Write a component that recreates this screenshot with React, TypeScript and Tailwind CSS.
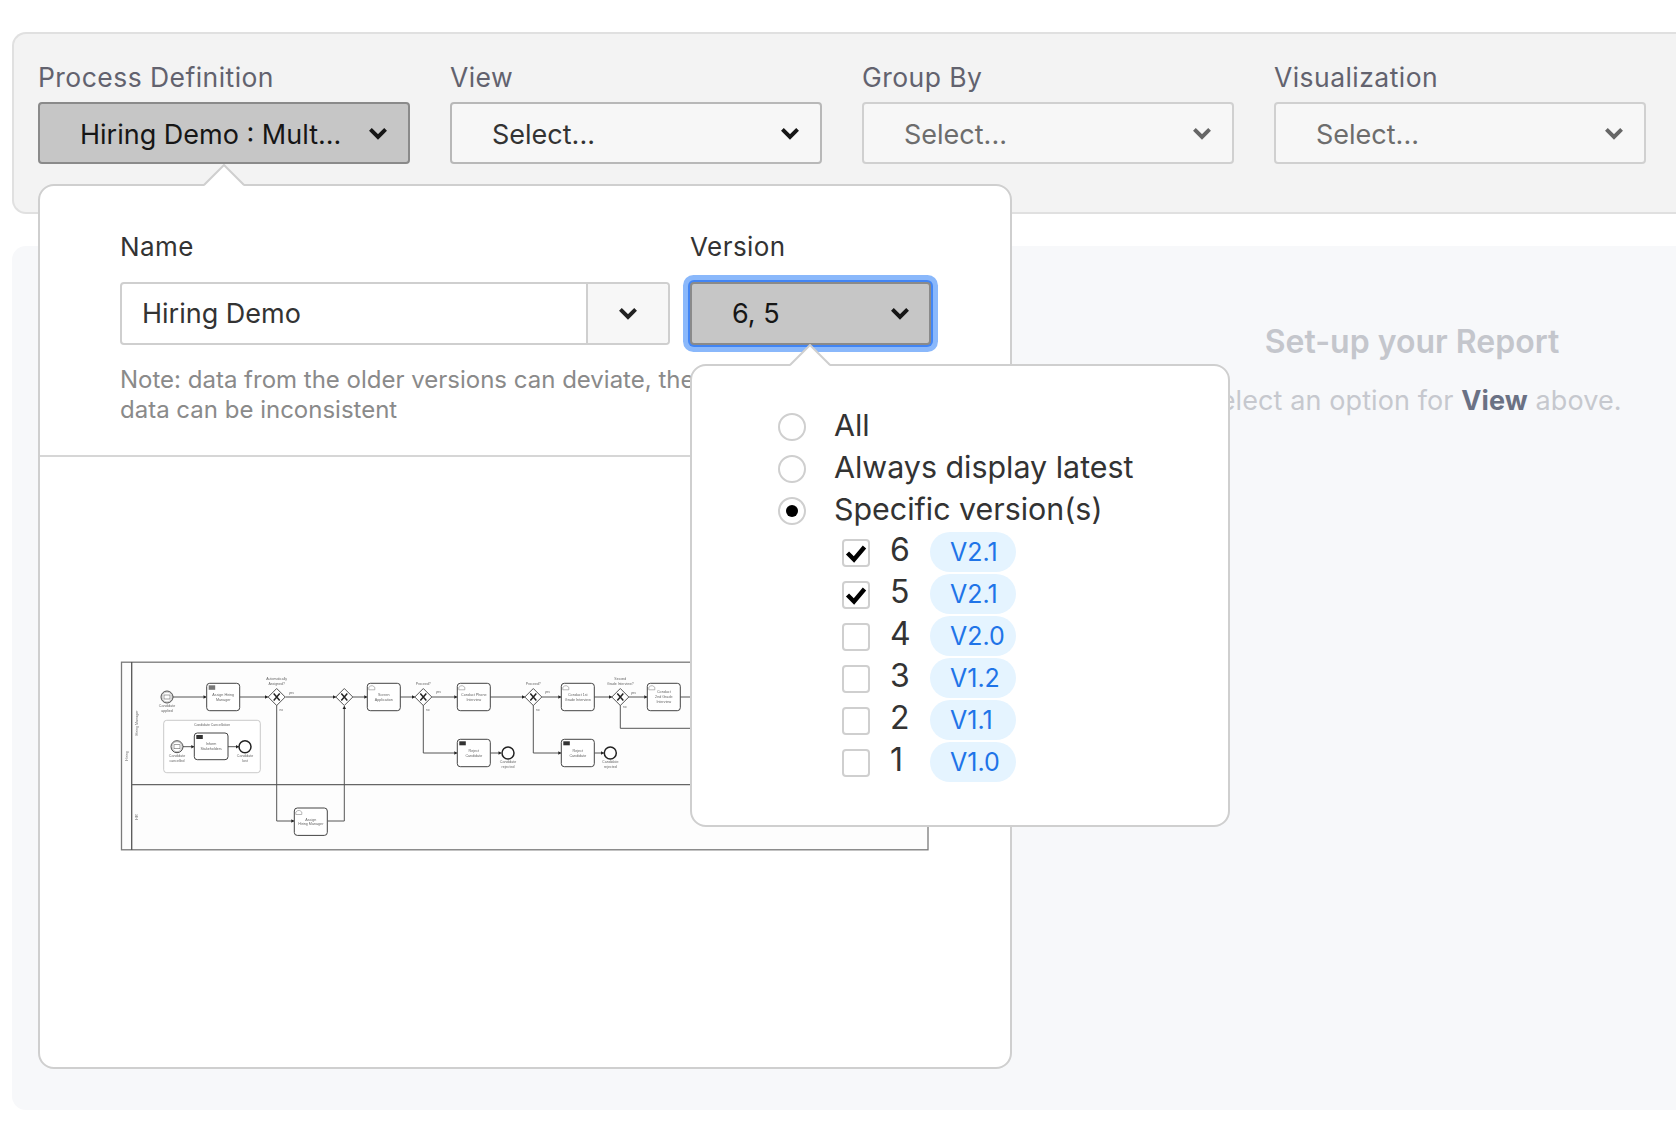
import React from 'react';

const Chevron: React.FC<{ className?: string }> = ({ className }) => (
    <svg viewBox="0 0 18 12" className={`w-[20px] h-[13px] shrink-0 ${className ?? ''}`} fill="none" stroke="currentColor" strokeWidth="3.6">
        <path d="M2 2.2 L9 9.2 L16 2.2" />
    </svg>
);

const Select: React.FC<{ label: string; value: string; state: 'active' | 'normal' | 'disabled' }> = ({ label, value, state }) => (
    <div className="w-[372px]">
        <div className="text-[26.5px] leading-[36px] text-[#62626e] tracking-[0.45px] mb-[7px]">{label}</div>
        <div
            className={
                'h-[62px] rounded border-2 flex items-center justify-between pl-[40px] pr-[20px] text-[27px] ' +
                (state === 'active'
                    ? 'bg-[#c6c6c6] border-[#8a8a8a] text-[#161616]'
                    : state === 'normal'
                      ? 'bg-[#f7f7f7] border-[#b8b8b8] text-[#333333]'
                      : 'bg-[#f7f7f7] border-[#d0d0d0] text-[#6d6d6d]')
            }
        >
            <span className="pt-[5px]">{value}</span>
            <Chevron className={state === 'disabled' ? 'text-[#666666]' : 'text-[#161616]'} />
        </div>
    </div>
);

const PopArrow: React.FC<{ className: string }> = ({ className }) => (
    <svg viewBox="0 0 42 22" className={`absolute w-[42px] h-[22px] ${className}`}>
        <polygon points="1,22 21,1 41,22" fill="#ffffff" />
        <polyline points="1,21 21,1 41,21" fill="none" stroke="#cfcfcf" strokeWidth="2" />
    </svg>
);

const Task: React.FC<{ x: number; y: number; w?: number; h?: number; lines: string[]; kind?: 'user' | 'send' | 'table' }> = ({ x, y, w = 33, h = 27.4, lines, kind }) => (
    <g>
        <rect x={x} y={y} width={w} height={h} rx="3" fill="#ffffff" stroke="#444444" strokeWidth="1" />
        {kind === 'user' && <path d={`M${x + 1.5} ${y + 6.5} v-2.5 l2 -1.5 h2 l2 1.5 v2.5 z`} fill="none" stroke="#999999" strokeWidth="0.7" />}
        {kind === 'send' && <rect x={x + 2} y={y + 2} width="6.5" height="4" fill="#333333" />}
        {kind === 'table' && <rect x={x + 2} y={y + 2} width="6.5" height="4.5" fill="#777777" />}
        {lines.map((l, i) => (
            <text key={i} x={x + w / 2} y={y + h / 2 + 1.2 + (i - (lines.length - 1) / 2) * 4.8} textAnchor="middle" fontSize="3.7" fill="#666666">{l}</text>
        ))}
    </g>
);

const Gateway: React.FC<{ x: number; y?: number; label?: string[] }> = ({ x, y = 696, label }) => (
    <g>
        <polygon points={`${x},${y - 8.5} ${x + 8.5},${y} ${x},${y + 8.5} ${x - 8.5},${y}`} fill="#ffffff" stroke="#555555" strokeWidth="1" />
        <path d={`M${x - 3} ${y - 3.5} L${x + 3} ${y + 3.5} M${x + 3} ${y - 3.5} L${x - 3} ${y + 3.5}`} stroke="#222222" strokeWidth="1.5" />
        {label?.map((l, i) => (
            <text key={i} x={x} y={y - 12.5 - (label.length - 1 - i) * 4.6} textAnchor="middle" fontSize="3.5" fill="#666666">{l}</text>
        ))}
    </g>
);

const Evt: React.FC<{ x: number; y: number; end?: boolean; lines: string[] }> = ({ x, y, end, lines }) => (
    <g>
        <circle cx={x} cy={y} r="6" fill="#ffffff" stroke="#222222" strokeWidth={end ? 1.5 : 0.8} />
        {!end && <circle cx={x} cy={y} r="5" fill="none" stroke="#666666" strokeWidth="0.4" />}
        {!end && <rect x={x - 3} y={y - 2} width="6" height="4" fill="none" stroke="#666666" strokeWidth="0.6" />}
        {lines.map((l, i) => (
            <text key={i} x={x} y={y + 10 + i * 4.8} textAnchor="middle" fontSize="3.6" fill="#666666">{l}</text>
        ))}
    </g>
);

// flow line ending in a small arrow head, going along the given points
const Flow: React.FC<{ d: string; tip: [number, number]; dir?: 'r' | 'u' }> = ({ d, tip, dir = 'r' }) => (
    <g>
        <path d={d} fill="none" stroke="#555555" strokeWidth="1" />
        {dir === 'r'
            ? <polygon points={`${tip[0]},${tip[1]} ${tip[0] - 3},${tip[1] - 1.8} ${tip[0] - 3},${tip[1] + 1.8}`} fill="#222222" />
            : <polygon points={`${tip[0]},${tip[1]} ${tip[0] - 1.8},${tip[1] + 3} ${tip[0] + 1.8},${tip[1] + 3}`} fill="#222222" />}
    </g>
);

const Note: React.FC<{ x: number; y: number; t: string }> = ({ x, y, t }) => (
    <text x={x} y={y} fontSize="3.2" fill="#666666">{t}</text>
);

const Diagram = () => (
    <svg viewBox="120 660 812 192" className="w-[812px] h-[192px] block blur-[0.25px] font-['Liberation_Sans',sans-serif]">
        <rect x="121.5" y="661.2" width="806.5" height="187.6" fill="#fdfdfd" stroke="#7a7a7a" strokeWidth="1.3" />
        <path d="M131.7 661 V849" stroke="#555555" strokeWidth="1.3" />
        <path d="M131.7 783.7 H928" stroke="#666666" strokeWidth="1.3" />
        <text transform="translate(127.5 755) rotate(-90)" textAnchor="middle" fontSize="3.7" fill="#666666">Hiring</text>
        <text transform="translate(138 722) rotate(-90)" textAnchor="middle" fontSize="3.7" fill="#666666">Hiring Manager</text>
        <text transform="translate(138 816) rotate(-90)" textAnchor="middle" fontSize="3.7" fill="#666666">HR</text>

        <Flow d="M173 696 H206" tip={[206.5, 696]} />
        <Flow d="M239.7 696 H268" tip={[268, 696]} />
        <Flow d="M285.5 696 H336" tip={[336, 696]} />
        <Flow d="M353 696 H367" tip={[367.3, 696]} />
        <Flow d="M400 696 H415" tip={[415, 696]} />
        <Flow d="M432 696 H457" tip={[457.3, 696]} />
        <Flow d="M490 696 H525" tip={[525, 696]} />
        <Flow d="M542 696 H561" tip={[561.3, 696]} />
        <Flow d="M594 696 H612" tip={[612, 696]} />
        <Flow d="M629 696 H647" tip={[647.3, 696]} />
        <path d="M680 696 H692 M620.3 704 V727.3 H700" fill="none" stroke="#555555" strokeWidth="1" />
        <Flow d="M276.7 704 V820 H294" tip={[294.3, 820]} />
        <Flow d="M327.7 820 H344.3 V705" tip={[344.3, 705]} dir="u" />
        <Flow d="M423.3 704 V752 H457" tip={[457.3, 752]} />
        <Flow d="M533.3 704 V752 H561" tip={[561.3, 752]} />
        <Flow d="M490.3 752 H501" tip={[501.5, 752]} />
        <Flow d="M594.3 752 H604" tip={[604, 752]} />

        <Evt x={167} y={696} lines={['Candidate', 'applied']} />
        <Task x={206.7} y={682.3} lines={['Assign Hiring', 'Manager']} kind="table" />
        <Gateway x={276.7} label={['Automatically', 'Assigned?']} />
        <Gateway x={344.3} />
        <Task x={367.3} y={682.3} lines={['Screen', 'Application']} kind="user" />
        <Gateway x={423.3} label={['Proceed?']} />
        <Task x={457.3} y={682.3} lines={['Conduct Phone', 'Interview']} kind="user" />
        <Gateway x={533.3} label={['Proceed?']} />
        <Task x={561.3} y={682.3} lines={['Conduct 1st', 'Grade Interview']} kind="user" />
        <Gateway x={620.3} label={['Second', 'Grade Interview?']} />
        <Task x={647.3} y={682.3} lines={['Conduct', '2nd Grade', 'Interview']} kind="user" />

        <Task x={457.3} y={738.3} lines={['Reject', 'Candidate']} kind="send" />
        <Evt x={508} y={752} end lines={['Candidate', 'rejected']} />
        <Task x={561.3} y={738.3} lines={['Reject', 'Candidate']} kind="send" />
        <Evt x={610.3} y={752} end lines={['Candidate', 'rejected']} />
        <Task x={294.3} y={807} lines={['Assign', 'Hiring Manager']} kind="user" />

        <rect x="163.7" y="719.3" width="96.6" height="52.4" rx="3" fill="#ffffff" stroke="#bbbbbb" strokeWidth="0.8" />
        <text x="212" y="724.8" textAnchor="middle" fontSize="3.5" fill="#666666">Candidate Cancellation</text>
        <Flow d="M183 745.7 H194" tip={[194.3, 745.7]} />
        <Flow d="M228 745.7 H239" tip={[239, 745.7]} />
        <Evt x={177} y={745.7} lines={['Candidate', 'cancelled']} />
        <Task x={194.3} y={732} w={33.7} h={26.7} lines={['Inform', 'Stakeholders']} kind="send" />
        <Evt x={245} y={745.7} end lines={['Candidate', 'lost']} />

        <Note x={289} y={692.5} t="yes" />
        <Note x={279.5} y={710} t="no" />
        <Note x={436} y={692} t="yes" />
        <Note x={426} y={710} t="no" />
        <Note x={545} y={692} t="yes" />
        <Note x={536} y={710} t="no" />
        <Note x={631} y={693} t="yes" />
        <Note x={623} y={707} t="no" />
    </svg>
);

const Radio: React.FC<{ label: string; checked?: boolean }> = ({ label, checked }) => (
    <div className="flex items-center h-[42px] gap-[28px]">
        <span className="w-[28px] h-[28px] rounded-full border-2 border-[#cfcfcf] bg-white flex items-center justify-center shrink-0">
            {checked && <span className="w-3 h-3 rounded-full bg-black" />}
        </span>
        <span className="text-[30.4px] leading-[42px] text-[#333333] -mt-[5px] whitespace-nowrap">{label}</span>
    </div>
);

const VersionRow: React.FC<{ num: number; tag: string; checked?: boolean }> = ({ num, tag, checked }) => (
    <div className="flex items-center h-[42px] pl-[64px]">
        <span className="w-[28px] h-[28px] rounded border-2 border-[#cfcfcf] bg-white shrink-0 mt-[1px]">
            {checked && (
                <svg viewBox="0 0 24 24" className="w-6 h-6" fill="none" stroke="#000000" strokeWidth="4.4">
                    <path d="M3.5 12 L10 18.5 L20.5 6" />
                </svg>
            )}
        </span>
        <span className="w-[40px] ml-[20px] text-[32px] leading-[42px] text-[#333333] -mt-[5px]">{num}</span>
        <span className="w-[86px] h-[40px] rounded-full bg-[#e5f4ff] text-[#1f74e8] text-[25px] pl-[20px] flex items-center pt-[2px]">{tag}</span>
    </div>
);

export default function App() {
    return (
        <div className="relative w-[1676px] h-[1136px] overflow-hidden bg-white pt-8 pl-3 font-['Inter',sans-serif]">
            <div className="h-[182px] bg-[#f3f3f3] border-2 border-r-0 border-[#e0e0e0] rounded-l-[14px] pl-[24px] pt-[25px] flex gap-[40px]">
                <Select label="Process Definition" value="Hiring Demo : Mult..." state="active" />
                <Select label="View" value="Select..." state="normal" />
                <Select label="Group By" value="Select..." state="disabled" />
                <Select label="Visualization" value="Select..." state="disabled" />
            </div>

            <div className="mt-[32px] h-[864px] bg-[#f7f8fa] rounded-l-[14px] pl-[1136px] pt-[74px] flex flex-col items-center">
                <div className="text-[32px] leading-[44px] font-semibold text-[#c4c6cc]">Set-up your Report</div>
                <div className="mt-[18px] text-[27px] leading-[38px] text-[#c6c8ce] whitespace-nowrap tracking-[0.1px]">
                    Select an option for <b className="font-bold text-[#6a7184]">View</b> above.
                </div>
            </div>

            {/* process definition popover */}
            <PopArrow className="left-[203px] top-[164px] z-10" />
            <div className="absolute left-[38px] top-[184px] w-[974px] h-[885px] bg-white border-2 border-[#cfcfcf] rounded-[16px] flex flex-col">
                <div className="h-[271px] border-b-2 border-[#d6d6d6] pl-[80px] pt-[43px] shrink-0">
                    <div className="flex gap-[20px]">
                        <div className="w-[550px]">
                            <div className="text-[26px] leading-[36px] text-[#333333] tracking-[0.45px]">Name</div>
                            <div className="mt-[17px] h-[63px] rounded border-2 border-[#cfcfcf] flex items-stretch">
                                <div className="flex-1 flex items-center pl-[20px] pt-[2px] text-[27px] text-[#333333]">Hiring Demo</div>
                                <div className="w-[82px] border-l-2 border-[#cfcfcf] bg-[#f7f7f7] flex items-center justify-center rounded-r">
                                    <Chevron className="text-[#222222]" />
                                </div>
                            </div>
                        </div>
                        <div className="w-[241px]">
                            <div className="text-[26px] leading-[36px] text-[#333333] tracking-[0.45px]">Version</div>
                            <div className="mt-[17px] h-[63px] rounded border-2 border-[#8a8a8a] bg-[#c6c6c6] text-[#161616] text-[27px] flex items-center justify-between pl-[40px] pr-[19px] shadow-[0_0_0_2px_#4285f4,0_0_0_7px_#8ab8fb]">
                                <span className="pt-[2px]">6, 5</span>
                                <Chevron />
                            </div>
                        </div>
                    </div>
                    <p className="mt-[20px] w-[810px] text-[24px] leading-[30px] text-[#8a8a8a]">
                        Note: data from the older versions can deviate, therefore the report data can be inconsistent
                    </p>
                </div>
                <div className="pl-[80px] pt-[204px]">
                    <Diagram />
                </div>
            </div>

            {/* version popover */}
            <PopArrow className="left-[789px] top-[344px] z-10" />
            <div className="absolute left-[690px] top-[364px] w-[540px] h-[463px] bg-white border-2 border-[#cfcfcf] rounded-[16px] pl-[86px] pt-[40px]">
                <Radio label="All" />
                <Radio label="Always display latest" />
                <Radio label="Specific version(s)" checked />
                <div className="-mt-[1px]">
                    <VersionRow num={6} tag="V2.1" checked />
                    <VersionRow num={5} tag="V2.1" checked />
                    <VersionRow num={4} tag="V2.0" />
                    <VersionRow num={3} tag="V1.2" />
                    <VersionRow num={2} tag="V1.1" />
                    <VersionRow num={1} tag="V1.0" />
                </div>
            </div>
        </div>
    );
}
